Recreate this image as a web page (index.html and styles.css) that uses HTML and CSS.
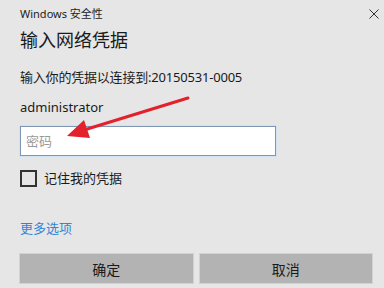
FILE: index.html
```html
<!DOCTYPE html>
<html lang="zh-CN">
  <head>
    <meta charset="UTF-8" />
    <title>Windows 安全性</title>
    <link rel="stylesheet" href="styles.css">
  </head>
  <body>
    <main class="dialog">
      <div class="caption">
        <span>Windows 安全性</span>
        <svg class="close" width="10" height="10" viewBox="0 0 10 10">
          <path d="M0.5 0.5 L9.5 9.5 M9.5 0.5 L0.5 9.5" stroke="#333" stroke-width="1" fill="none" />
        </svg>
      </div>
      <h1 class="title">输入网络凭据</h1>
      <p class="target">输入你的凭据以连接到:20150531-0005</p>
      <p class="user">administrator</p>
      <input class="password" type="password" placeholder="密码">
      <label class="remember">
        <span class="box"></span>
        <span>记住我的凭据</span>
      </label>
      <a class="more" href="#">更多选项</a>
      <div class="actions">
        <button class="btn">确定</button>
        <button class="btn">取消</button>
      </div>
    </main>
    <!-- red annotation arrow drawn over the dialog -->
    <svg class="arrow" width="384" height="288" viewBox="0 0 384 288">
      <line x1="188" y1="98" x2="84" y2="130" stroke="#e3202c" stroke-width="3" stroke-linecap="round" />
      <polygon points="67,136 84,120 90,138" fill="#e3202c" />
    </svg>
  </body>
</html>
```

FILE: styles.css
```css
body {
  margin: 0;
  background: #e6e6e6;
  font-family: "Noto Sans", "Noto Sans CJK SC", sans-serif;
  color: #1a1a1a;
}
.dialog {
  width: 384px;
  height: 288px;
  padding: 0 12px 0 20px;
  box-sizing: border-box;
  display: flex;
  flex-direction: column;
  align-items: flex-start;
}
.caption {
  align-self: stretch;
  display: flex;
  justify-content: space-between;
  align-items: center;
  margin: 6px -7px 0 0;
  font-size: 11px;
  line-height: 16px;
  color: #222;
}
.title {
  margin: 4px 0 0;
  font-size: 18px;
  font-weight: normal;
  line-height: 28px;
}
.target,
.user {
  margin: 13px 0 0;
  font-size: 13px;
  line-height: 20px;
}
.target {
  letter-spacing: -0.2px;
}
.user {
  margin-top: 10px;
}
.password {
  margin-top: 9px;
  width: 256px;
  height: 30px;
  box-sizing: border-box;
  border: 1px solid #7f97b5;
  box-shadow: 0 0 0 1px #cfe3f5;
  background: #fff;
  padding: 0 5px;
  font: 13px "Noto Sans", "Noto Sans CJK SC", sans-serif;
  outline: none;
}
.password::placeholder {
  color: #9a9a9a;
}
.remember {
  margin-top: 14px;
  display: flex;
  align-items: center;
  gap: 7px;
  font-size: 13px;
  line-height: 17px;
}
.box {
  width: 17px;
  height: 17px;
  box-sizing: border-box;
  border: 2px solid #333;
}
.more {
  margin-top: 31px;
  font-size: 13px;
  line-height: 20px;
  color: #2f86d6;
  text-decoration: none;
}
.actions {
  align-self: stretch;
  margin-top: 16px;
  display: flex;
  gap: 7px;
}
.btn {
  flex: 1;
  height: 29px;
  border: none;
  outline: 1px solid #d2d2d2;
  background: #b3b3b3;
  font: 14px "Noto Sans", "Noto Sans CJK SC", sans-serif;
  color: #1a1a1a;
}
.arrow {
  position: absolute;
  left: 0;
  top: 0;
  pointer-events: none;
}
```
